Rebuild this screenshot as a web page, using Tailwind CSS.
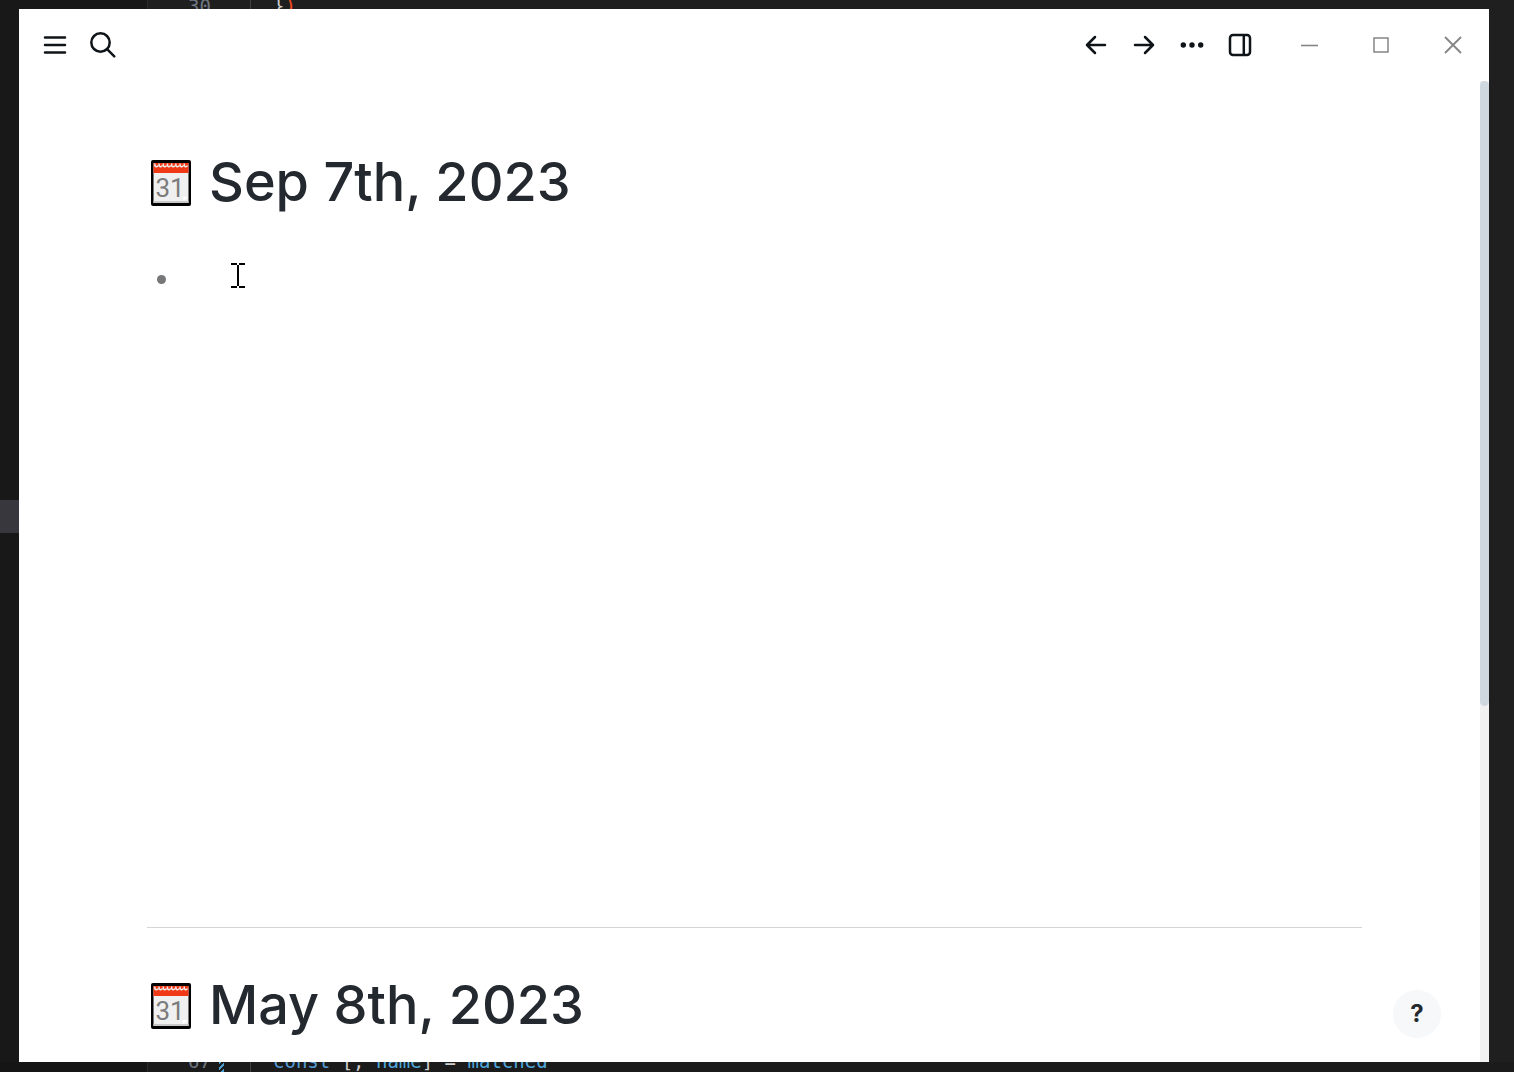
<!DOCTYPE html>
<html lang="en">
<head>
<meta charset="utf-8">
<meta name="viewport" content="width=device-width, initial-scale=1">
<title>Journals</title>
<script src="https://cdn.jsdelivr.net/npm/@tailwindcss/browser@4"></script>
</head>
<body class="flex h-screen flex-col overflow-hidden bg-[#1f1f1f] font-['Inter',sans-serif] text-[#24292f]">
<svg class="hidden" aria-hidden="true">
  <symbol id="calendar" viewBox="0 0 40 46">
    <rect width="40" height="46" rx="2" fill="#000"/>
    <rect x="2.500" y="3" width="35" height="40" fill="#f0f0f0"/>
    <rect x="2.500" y="3" width="35" height="10" fill="#f03a17"/>
    <rect x="2.500" y="41" width="35" height="2" fill="#c8c8c8"/>
    <path d="M32 41v-4h5z" fill="#fff"/>
    <path d="M4 3.500c-1 3 2 4.500 3 2M8.200 3.500c-1 3 2 4.500 3 2M12.400 3.500c-1 3 2 4.500 3 2M16.600 3.500c-1 3 2 4.500 3 2M20.800 3.500c-1 3 2 4.500 3 2M25 3.500c-1 3 2 4.500 3 2M29.200 3.500c-1 3 2 4.500 3 2M33.400 3.500c-1 3 2 4.500 3 2" fill="none" stroke="#eee" stroke-width="1.500"/>
    <text x="19" y="37" text-anchor="middle" font-family="Roboto, sans-serif" font-size="26" font-weight="400" fill="#7c7c7c">31</text>
  </symbol>
</svg>

<div class="flex h-[9px] shrink-0 overflow-hidden font-['DejaVu_Sans_Mono',monospace] text-[19px] leading-[18px] whitespace-pre" aria-hidden="true">
  <div class="w-[148px] shrink-0 border-r border-[#2b2b2b] bg-[#181818]"></div>
  <div class="-mt-[3px] w-[63px] shrink-0 text-right text-[#6e7681]">30</div>
  <div class="ml-[39px] w-[23px] shrink-0 border-l border-[#404040]"></div>
  <div class="-mt-[3px] text-[#ccc]">}<span class="text-[#f44a22]">)</span></div>
</div>

<div class="flex min-h-0 flex-1">
  <div class="w-[19px] shrink-0 bg-[#181818] pt-[491px]"><div class="h-[33px] bg-[#37373d]"></div></div>

  <div class="relative flex min-w-0 flex-1 flex-col bg-white">
    <header class="flex h-[72px] shrink-0 items-center pl-3 text-[#0f1419]">
      <button aria-label="Menu" class="flex size-12 items-center justify-center">
        <svg class="size-8" viewBox="0 0 32 32" fill="none" stroke="currentColor" stroke-width="2.500" stroke-linecap="round"><path d="M6 8.500h20M6 16h20M6 23.500h20"/></svg>
      </button>
      <button aria-label="Search" class="flex size-12 items-center justify-center">
        <svg class="size-8" viewBox="0 0 32 32" fill="none" stroke="currentColor" stroke-width="2.500" stroke-linecap="round"><circle cx="13.500" cy="13.500" r="9.200"/><path d="M20.300 20.300l7 7"/></svg>
      </button>
      <div class="flex-1"></div>
      <button aria-label="Back" class="flex size-12 items-center justify-center">
        <svg class="size-8" viewBox="0 0 32 32" fill="none" stroke="currentColor" stroke-width="2.500" stroke-linecap="round" stroke-linejoin="round"><path d="M25 16H7M15 8l-8 8 8 8"/></svg>
      </button>
      <button aria-label="Forward" class="flex size-12 items-center justify-center">
        <svg class="size-8" viewBox="0 0 32 32" fill="none" stroke="currentColor" stroke-width="2.500" stroke-linecap="round" stroke-linejoin="round"><path d="M7 16h18M17 8l8 8-8 8"/></svg>
      </button>
      <button aria-label="More" class="flex size-12 items-center justify-center">
        <svg class="size-8" viewBox="0 0 32 32" fill="currentColor"><circle cx="7.300" cy="16" r="2.700"/><circle cx="16" cy="16" r="2.700"/><circle cx="24.700" cy="16" r="2.700"/></svg>
      </button>
      <button aria-label="Toggle sidebar" class="mr-[9px] flex size-12 items-center justify-center">
        <svg class="size-8" viewBox="0 0 32 32" fill="none" stroke="currentColor" stroke-width="2.500"><rect x="6" y="6" width="20" height="20" rx="3"/><path d="M19.800 6v20"/></svg>
      </button>
      <button aria-label="Minimize" class="flex h-12 w-[72px] items-center justify-center text-[#858585]">
        <svg class="size-8" viewBox="0 0 32 32" fill="none" stroke="currentColor" stroke-width="1.600"><path d="M8 16.500h17"/></svg>
      </button>
      <button aria-label="Maximize" class="flex h-12 w-[72px] items-center justify-center text-[#858585]">
        <svg class="size-8" viewBox="0 0 32 32" fill="none" stroke="currentColor" stroke-width="1.500"><rect x="9" y="9" width="14" height="14"/></svg>
      </button>
      <button aria-label="Close" class="flex h-12 w-[72px] items-center justify-center text-[#858585]">
        <svg class="size-8" viewBox="0 0 32 32" fill="none" stroke="currentColor" stroke-width="1.800"><path d="M8 8l16 16M24 8L8 24"/></svg>
      </button>
    </header>

    <div class="flex min-h-0 flex-1">
      <main class="min-w-0 flex-1 overflow-hidden pr-[118px] pl-32">
        <section class="min-h-[847px] border-b border-[#d3d6d9] pt-[66px]">
          <h1 class="flex h-[72px] items-center gap-[18px] pl-1 text-[54px] leading-[70px] font-medium">
            <svg class="h-[46px] w-10 shrink-0" aria-hidden="true"><use href="#calendar"/></svg>
            <a href="#sep-7" class="pb-[2px] whitespace-nowrap">Sep 7th, 2023</a>
          </h1>
          <div class="relative mt-9 flex h-12 items-center pl-[10px]">
            <span class="size-[9px] rounded-full bg-[#757779]"></span>
            <svg class="absolute top-2 left-[84px] h-[25px] w-[14px]" viewBox="0 0 14 25" fill="none" stroke="#000" stroke-width="2" aria-hidden="true"><path d="M0 1h6M8 1h6M0 24h6M8 24h6M7 2v21"/></svg>
          </div>
        </section>
        <section class="pt-[42px]">
          <h1 class="flex h-[72px] items-center gap-[18px] pl-1 text-[54px] leading-[70px] font-medium">
            <svg class="h-[46px] w-10 shrink-0" aria-hidden="true"><use href="#calendar"/></svg>
            <a href="#may-8" class="pb-[2px] whitespace-nowrap">May 8th, 2023</a>
          </h1>
        </section>
      </main>
      <div class="w-[9px] shrink-0 bg-[#f1f1f1]"><div class="h-[625px] rounded-full bg-[#cfd7df]"></div></div>
    </div>

    <button aria-label="Help" class="absolute right-12 bottom-6 size-12 rounded-full bg-[#f6f8fa] text-2xl font-bold">?</button>
  </div>
  <div class="w-[25px] shrink-0 bg-[#1f1f1f]"></div>
</div>

<div class="flex h-[10px] shrink-0 overflow-hidden bg-[#1b1b1b] font-['DejaVu_Sans_Mono',monospace] text-[19px] leading-[18px] whitespace-pre" aria-hidden="true">
  <div class="w-[148px] shrink-0 border-r border-[#2b2b2b] bg-[#151515]"></div>
  <div class="-mt-[10px] w-[63px] shrink-0 text-right text-[#6e7681]">67</div>
  <div class="ml-2 w-[5px] shrink-0 bg-[repeating-linear-gradient(135deg,#4a9fd0_0_2px,#1b1b1b_2px_4px)]"></div>
  <div class="ml-[26px] w-[23px] shrink-0 border-l border-[#404040]"></div>
  <div class="-mt-[10px] text-[#ccc]"><span class="text-[#569cd6]">const</span> [, <span class="text-[#4fa8dc]">name</span>] = <span class="text-[#4fa8dc]">matched</span></div>
</div>
</body>
</html>
